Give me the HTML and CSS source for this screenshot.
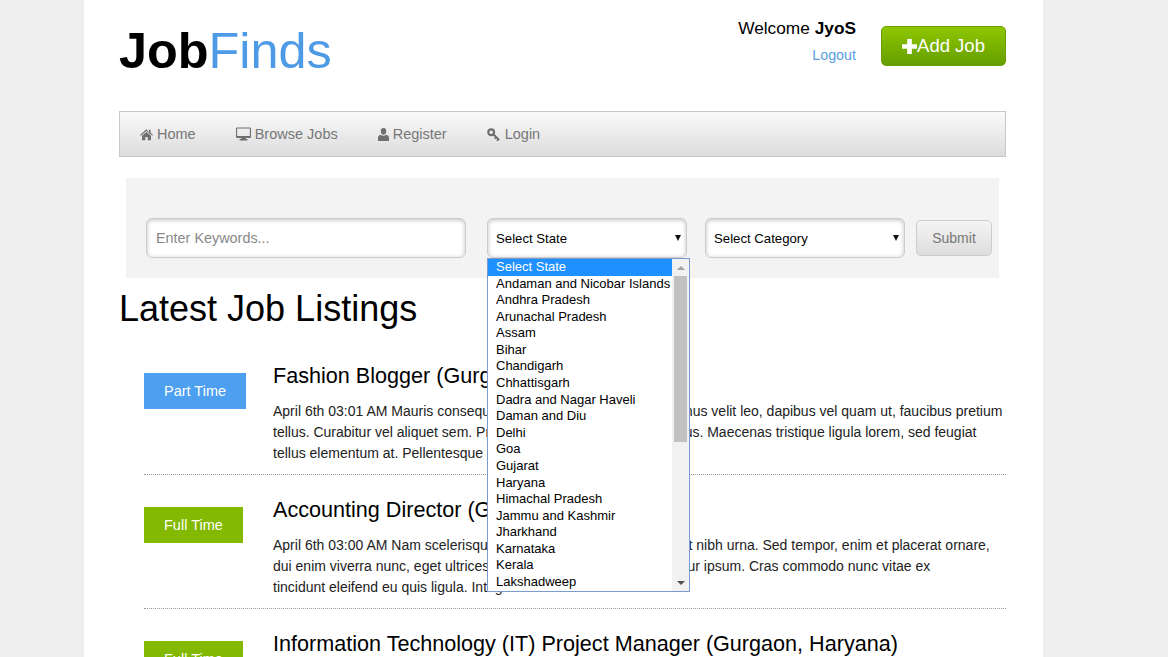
FILE: index.html
```html
<!DOCTYPE html>
<html lang="en">
<head>
<meta charset="UTF-8" />
<title>JobFinds</title>
<link rel="stylesheet" href="styles.css">
</head>
<body>
<div class="container">
  <header class="header">
    <h1 class="logo"><strong>Job</strong>Finds</h1>
    <div class="user-box">
      <div class="welcome">Welcome <strong>JyoS</strong></div>
      <a class="logout" href="#">Logout</a>
    </div>
    <a class="add-job" href="#">
      <svg class="plus" viewBox="0 0 16 16"><path d="M5.500 0h5v5.500H16v5h-5.500V16h-5v-5.500H0v-5h5.500z"/></svg>Add Job
    </a>
  </header>

  <nav class="nav">
    <a href="#"><svg class="ico" viewBox="0 0 16 14"><path d="M8 .5 0 7.500l.9 1L8 2.600l7.100 5.900.9-1-3-2.600V1.200h-2v2.900zM2.500 8.600V14h4V10h3v4h4V8.600L8 4z"/></svg>Home</a>
    <a href="#"><svg class="ico wide" viewBox="0 0 16 14"><path fill-rule="evenodd" d="M1 0h14c.6 0 1 .4 1 1v9.200c0 .6-.4 1-1 1h-4.600v1.200h1.800V14H3.800v-1.600h1.800v-1.200H1c-.6 0-1-.4-1-1V1c0-.6.4-1 1-1zm.2 1.200v8h13.600v-8z"/></svg>Browse Jobs</a>
    <a href="#"><svg class="ico user" viewBox="0 0 12 14"><path d="M6 0c1.800 0 3 1.400 3 3.400S7.800 7.200 6 7.200 3 5.400 3 3.400 4.200 0 6 0zM3 7.200c.8.700 1.800 1.100 3 1.100s2.200-.4 3-1.100c1.800.5 3 1.600 3 3.400V14H0v-3.400c0-1.800 1.200-2.900 3-3.400z"/></svg>Register</a>
    <a href="#"><svg class="ico key" viewBox="0 0 14 14"><circle class="key-line" cx="4.500" cy="4.500" r="3.100" stroke-width="2.400"/><path class="key-line" stroke-width="2.200" d="M6.500 6.500l6.500 6.500"/><path class="key-line" stroke-width="1.600" d="M9.800 9.800l-1.700 1.700M12.300 12.300l-1.700 1.700"/></svg>Login</a>
  </nav>

  <form class="search" onsubmit="return false;">
    <input class="keywords" type="text" placeholder="Enter Keywords..." />
    <div class="select-wrap">
      <div class="select-box">Select State</div>
      <div class="dropdown">
        <ul class="options">
          <li class="selected">Select State</li>
          <li>Andaman and Nicobar Islands</li>
          <li>Andhra Pradesh</li>
          <li>Arunachal Pradesh</li>
          <li>Assam</li>
          <li>Bihar</li>
          <li>Chandigarh</li>
          <li>Chhattisgarh</li>
          <li>Dadra and Nagar Haveli</li>
          <li>Daman and Diu</li>
          <li>Delhi</li>
          <li>Goa</li>
          <li>Gujarat</li>
          <li>Haryana</li>
          <li>Himachal Pradesh</li>
          <li>Jammu and Kashmir</li>
          <li>Jharkhand</li>
          <li>Karnataka</li>
          <li>Kerala</li>
          <li>Lakshadweep</li>
        </ul>
        <div class="scrollbar">
          <span class="arrow-up"></span>
          <span class="thumb"></span>
          <span class="arrow-down"></span>
        </div>
      </div>
    </div>
    <div class="select-wrap">
      <div class="select-box">Select Category</div>
    </div>
    <button class="submit">Submit</button>
  </form>

  <h2 class="listing-title">Latest Job Listings</h2>

  <div class="job">
    <div class="job-side"><span class="tag part">Part Time</span></div>
    <div class="job-main">
      <h3>Fashion Blogger (Gurgaon, Haryana)</h3>
      <p>April 6th 03:01 AM Mauris consequat nisi diam efficitur lacus. Vivamus velit leo, dapibus vel quam ut, faucibus pretium<br>tellus. Curabitur vel aliquet sem. Proin nec risus lectus gravida luctus. Maecenas tristique ligula lorem, sed feugiat<br>tellus elementum at. Pellentesque habitant morbi</p>
    </div>
  </div>
  <div class="job">
    <div class="job-side"><span class="tag full">Full Time</span></div>
    <div class="job-main">
      <h3>Accounting Director (Gurgaon, Haryana)</h3>
      <p>April 6th 03:00 AM Nam scelerisque vel nisi in consequat a. Nulla at nibh urna. Sed tempor, enim et placerat ornare,<br>dui enim viverra nunc, eget ultrices lacus orci a neque a. Sed efficitur ipsum. Cras commodo nunc vitae ex<br>tincidunt eleifend eu quis ligula. Integer</p>
    </div>
  </div>
  <div class="job">
    <div class="job-side"><span class="tag full">Full Time</span></div>
    <div class="job-main">
      <h3>Information Technology (IT) Project Manager (Gurgaon, Haryana)</h3>
    </div>
  </div>
</div>
</body>
</html>
```

FILE: styles.css
```css
html, body {
  height: 100%;
  overflow: hidden;
}
body {
  margin: 0;
  background: #eee;
  color: #000;
  font-family: "Liberation Sans", Arial, sans-serif;
  font-size: 14px;
}
a {
  text-decoration: none;
}
.container {
  width: 959px;
  height: 100%;
  overflow: hidden;
  margin-left: 84px;
  padding: 0 37px 0 35px;
  box-sizing: border-box;
  background: #fff;
}
.header {
  display: flex;
  align-items: flex-start;
  height: 111px;
}
.logo {
  flex: 1;
  margin: 25px 0 0;
  font-size: 50.400px;
  line-height: 52px;
  font-weight: normal;
  color: #4d9be6;
}
.logo strong {
  color: #000;
}
.user-box {
  margin: 18px 25px 0 0;
  text-align: right;
}
.welcome {
  font-size: 17.300px;
  line-height: 20px;
}
.logout {
  display: block;
  margin-top: 8px;
  font-size: 14.300px;
  line-height: 18px;
  color: #5ba0e3;
}
.add-job {
  display: flex;
  align-items: center;
  justify-content: center;
  width: 125px;
  height: 40px;
  margin-top: 26px;
  box-sizing: border-box;
  border: 1px solid #689f00;
  border-radius: 5px;
  background: linear-gradient(#8fc600, #659e00);
  color: #fff;
  font-size: 18.500px;
}
.plus {
  width: 15px;
  height: 15px;
  fill: #fff;
}
.nav {
  display: flex;
  gap: 40px;
  height: 46px;
  box-sizing: border-box;
  padding-left: 20px;
  align-items: center;
  border: 1px solid #c8c8c8;
  background: linear-gradient(#fafafa, #dcdcdc);
}
.nav a {
  display: flex;
  align-items: center;
  color: #777;
  font-size: 14.500px;
}
.ico {
  width: 13px;
  height: 13px;
  margin-right: 4px;
  fill: #6f6f6f;
}
.ico.wide {
  width: 15px;
  height: 14px;
}
.ico.user {
  width: 11px;
}
.ico.key {
  margin-right: 5px;
}
.key-line {
  fill: none;
  stroke: #6f6f6f;
}
.search {
  display: flex;
  align-items: center;
  height: 100px;
  box-sizing: border-box;
  margin: 21px 7px 0;
  padding: 40px 0 20px 20px;
  background: #f3f3f3;
}
.keywords {
  width: 320px;
  height: 40px;
  box-sizing: border-box;
  margin-right: 21px;
  padding: 0 9px;
  border: 1px solid #ccc;
  border-radius: 6px;
  box-shadow: inset 0 1px 4px rgba(0,0,0,.25);
  font: 14.400px "Liberation Sans", Arial, sans-serif;
}
.keywords::placeholder {
  color: #888;
}
.select-wrap {
  position: relative;
  width: 200px;
  margin-right: 18px;
  font-size: 13.200px;
}
.select-wrap:nth-of-type(2) {
  margin-right: 11px;
}
.select-box {
  position: relative;
  height: 40px;
  box-sizing: border-box;
  padding-left: 8px;
  line-height: 39px;
  border: 1px solid #ccc;
  border-radius: 6px;
  background: #fff;
  box-shadow: inset 0 1px 4px rgba(0,0,0,.25);
}
.select-box::after {
  content: "";
  position: absolute;
  right: 5px;
  top: 16px;
  border-left: 3.500px solid transparent;
  border-right: 3.500px solid transparent;
  border-top: 6px solid #111;
}
.submit {
  width: 76px;
  height: 36px;
  padding: 0;
  border: 1px solid #ccc;
  border-radius: 5px;
  background: linear-gradient(#f4f4f4, #ddd);
  color: #777;
  font: 14px "Liberation Sans", Arial, sans-serif;
}
.dropdown {
  position: absolute;
  top: 100%;
  left: 0;
  z-index: 5;
  display: flex;
  width: 203px;
  height: 334px;
  box-sizing: border-box;
  border: 1px solid #7b9bd0;
  background: #fff;
}
.options {
  flex: 1;
  min-width: 0;
  margin: 0;
  padding: 0;
  list-style: none;
  font-size: 13px;
}
.options li {
  height: 16.580px;
  line-height: 16.580px;
  padding-left: 8px;
  white-space: nowrap;
}
.options .selected {
  background: #1e90ff;
  color: #fff;
}
.scrollbar {
  position: relative;
  flex: 0 0 17px;
  background: #f1f1f1;
}
.thumb {
  position: absolute;
  top: 17px;
  left: 2px;
  width: 13px;
  height: 166px;
  background: #c1c1c1;
}
.arrow-up, .arrow-down {
  position: absolute;
  left: 4.500px;
  border-left: 4px solid transparent;
  border-right: 4px solid transparent;
}
.arrow-up {
  top: 7px;
  border-bottom: 4px solid #a3a3a3;
}
.arrow-down {
  bottom: 6px;
  border-top: 4px solid #505050;
}
.listing-title {
  margin: 11px 0 12px;
  font-size: 36px;
  line-height: 40px;
  font-weight: normal;
}
.job {
  display: flex;
  margin-left: 25px;
  padding: 23px 0 10px;
  border-bottom: 1px dotted #999;
}
.job-side {
  flex: 0 0 129px;
}
.tag {
  display: inline-block;
  margin-top: 9px;
  padding: 0 20px;
  line-height: 36px;
  color: #fff;
  font-size: 14.500px;
}
.tag.part {
  background: #4d9ff0;
}
.tag.full {
  background: #83b900;
}
.job-main {
  flex: 1;
}
.job-main h3 {
  margin: 0 0 13px;
  font-size: 21.600px;
  line-height: 24px;
  font-weight: normal;
}
.job-main p {
  margin: 0;
  font-size: 14px;
  line-height: 21px;
  color: #222;
  white-space: nowrap;
}
```
